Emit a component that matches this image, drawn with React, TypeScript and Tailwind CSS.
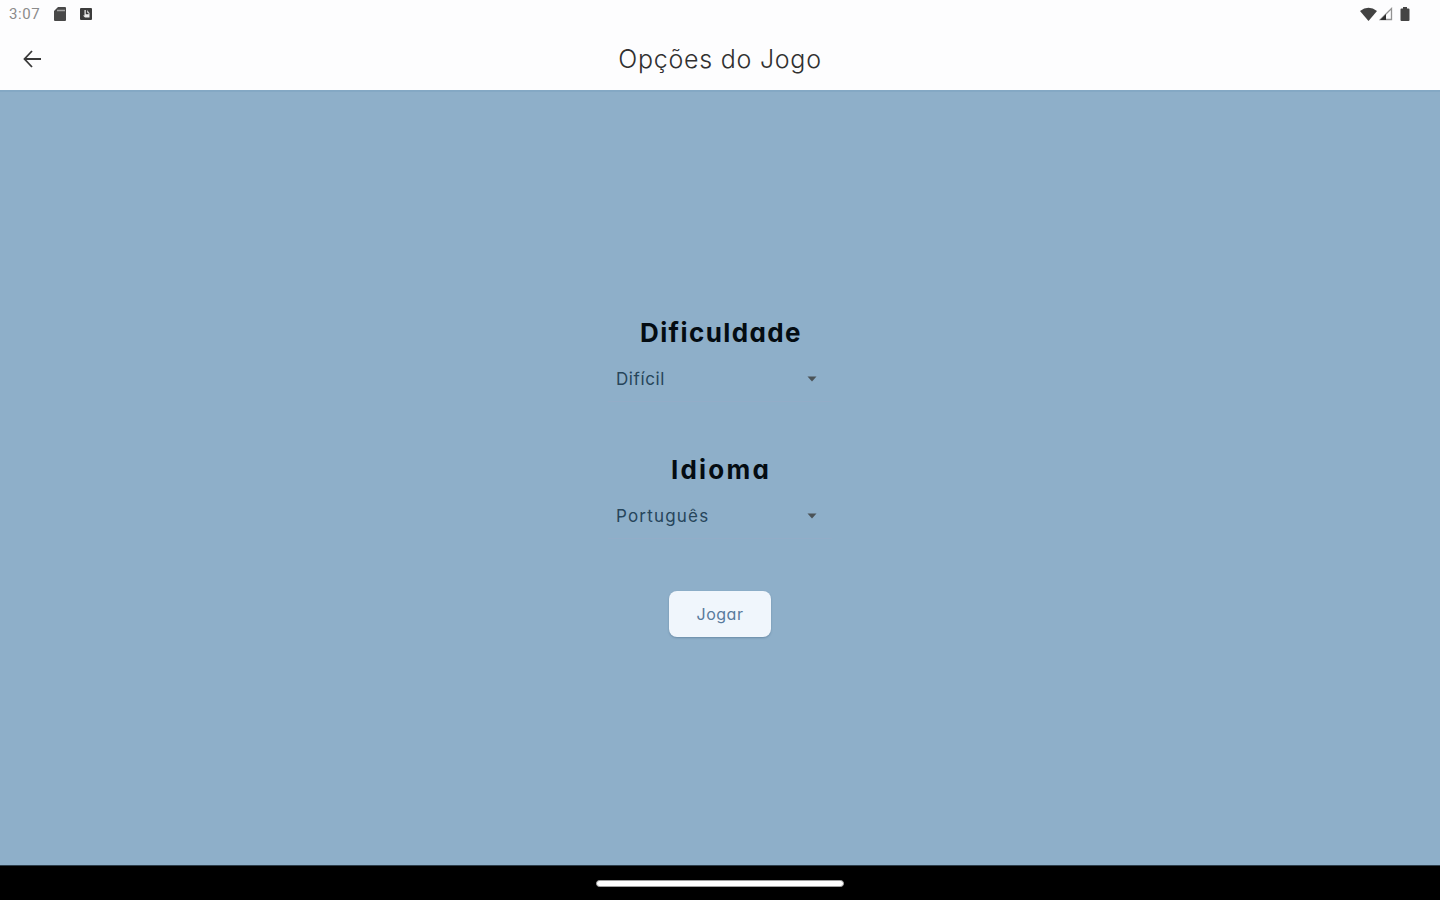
import { useState } from "react";

const DIFFICULTIES = ["Fácil", "Médio", "Difícil"];
const LANGUAGES = ["Português", "English", "Español"];

type OptionFieldProps = {
  label: string;
  value: string;
  options: string[];
  labelClass: string;
  valueClass: string;
  onChange: (value: string) => void;
};

function OptionField({ label, value, options, labelClass, valueClass, onChange }: OptionFieldProps) {
  const next = () => onChange(options[(options.indexOf(value) + 1) % options.length]);

  return (
    <section className="flex w-[224px] flex-col items-center">
      <h2 className={`h-10 whitespace-nowrap text-[26px] leading-10 font-bold text-[#040c12] ${labelClass}`}>{label}</h2>
      <button
        onClick={next}
        className="mt-1 flex h-[45px] w-full items-center justify-between border-b border-[#93adc8] pr-[15px] pl-2 text-left"
      >
        <span className={`pt-[2px] text-[17px] text-[#26455b] ${valueClass}`}>{value}</span>
        <svg width="10" height="6" viewBox="0 0 10 6" fill="#4b5357">
          <path d="M0.5 0.5h9L5 5.5z" />
        </svg>
      </button>
    </section>
  );
}

function StatusBar() {
  return (
    <div className="flex h-7 items-center justify-between pr-[30px] pl-[9px]">
      <div className="flex items-center">
        <span className="w-[44px] pt-px font-[Roboto] text-[15px] tracking-[0.6px] text-[#8b8b8b]">3:07</span>
        <svg width="14" height="16" viewBox="0 0 14 16" fill="#484848">
          <path d="M5 1h7q1 0 1 1v12q0 1-1 1H2q-1 0-1-1V5z" />
          <path d="M4 4.500h8" stroke="#a4a4a4" strokeWidth="1.5" />
        </svg>
        <svg className="ml-[13px]" width="12" height="12" viewBox="0 0 12 12">
          <rect width="12" height="12" rx="1" fill="#3c3c3c" />
          <path d="M4.500 2H7l2.500 3v4.500H5L3 7.500h1.500z" fill="#eee" />
          <path d="M6.500 2v3.500h2" fill="none" stroke="#3c3c3c" strokeWidth="1.5" />
        </svg>
      </div>
      <div className="flex items-center">
        <svg width="17" height="14" viewBox="0 0 17 14" fill="#424242">
          <path d="M0 4Q8.500-2.500 17 4L8.500 14z" />
        </svg>
        <svg className="ml-[2px]" width="14" height="14" viewBox="0 0 14 14">
          <path d="M1.500 12.500L12.500 1.500v11z" fill="none" stroke="#929292" strokeWidth="1.3" />
          <path d="M1 13L7 7v6z" fill="#303030" />
        </svg>
        <svg className="ml-[7px]" width="10" height="14" viewBox="0 0 10 14" fill="#444">
          <path d="M3 0h4v1.500h1.500q1 0 1 1V13q0 1-1 1h-7q-1 0-1-1V2.500q0-1 1-1H3z" />
        </svg>
      </div>
    </div>
  );
}

export default function App() {
  const [difficulty, setDifficulty] = useState("Difícil");
  const [language, setLanguage] = useState("Português");

  return (
    <div className="flex h-screen w-full flex-col overflow-hidden bg-[#8eafc9] font-['Inter','Open_Sans',sans-serif] [font-feature-settings:'cv11']">
      <header className="h-[92px] shrink-0 border-b-2 border-[#84a8c4] bg-[#fdfdfe]">
        <StatusBar />
        <div className="grid h-[62px] grid-cols-[1fr_auto_1fr] items-center">
          <button aria-label="Voltar" className="ml-[23px] w-[18px]">
            <svg width="18" height="18" viewBox="0 0 18 18" fill="none" stroke="#383838" strokeWidth="1.8">
              <path d="M18 9H2M9 1L1.500 9L9 17" />
            </svg>
          </button>
          <h1 className="pt-[2px] whitespace-nowrap text-[25px] font-light tracking-[0.75px] text-[#303030]">Opções do Jogo</h1>
        </div>
      </header>

      <main className="flex flex-1 flex-col items-center pt-[221px]">
        <OptionField
          label="Dificuldade"
          value={difficulty}
          options={DIFFICULTIES}
          labelClass="-mr-[2px] tracking-[1.4px]"
          valueClass="tracking-[0.6px]"
          onChange={setDifficulty}
        />
        <div className="mt-12">
          <OptionField
            label="Idioma"
            value={language}
            options={LANGUAGES}
            labelClass="-mr-[2px] tracking-[2.2px]"
            valueClass="tracking-[1.2px]"
            onChange={setLanguage}
          />
        </div>
        <button className="mt-[52px] h-[46px] w-[102px] rounded-lg bg-[#f0f6fc] text-[16px] tracking-[0.5px] text-[#587b9d] shadow-[0_1px_2px_rgba(40,75,105,0.35)]">
          Jogar
        </button>
      </main>

      <footer className="flex h-[35px] shrink-0 items-center justify-center border-t border-[#2c3d4a] bg-black">
        <div className="h-[7px] w-[248px] rounded-full border border-[#a0a0a0] bg-white" />
      </footer>
    </div>
  );
}
